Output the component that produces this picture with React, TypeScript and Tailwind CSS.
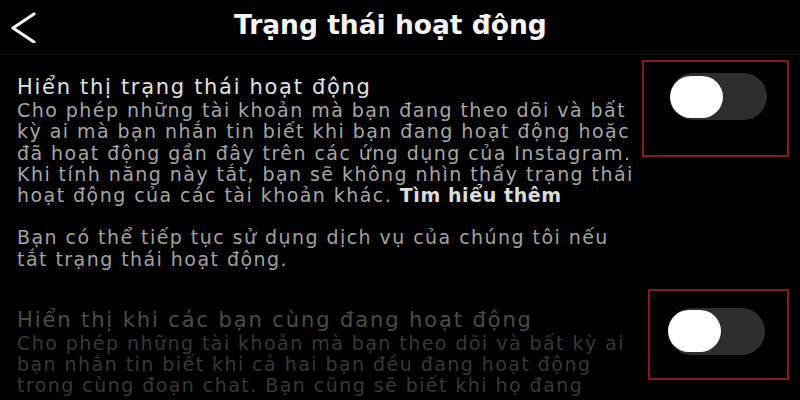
export default function App() {
  const desc1 = [
    'Cho phép những tài khoản mà bạn đang theo dõi và bất',
    'kỳ ai mà bạn nhắn tin biết khi bạn đang hoạt động hoặc',
    'đã hoạt động gần đây trên các ứng dụng của Instagram.',
    'Khi tính năng này tắt, bạn sẽ không nhìn thấy trạng thái',
  ]
  const para2 = [
    'Bạn có thể tiếp tục sử dụng dịch vụ của chúng tôi nếu',
    'tắt trạng thái hoạt động.',
  ]
  const desc2 = [
    'Cho phép những tài khoản mà bạn theo dõi và bất kỳ ai',
    'bạn nhắn tin biết khi cả hai bạn đều đang hoạt động',
    'trong cùng đoạn chat. Bạn cũng sẽ biết khi họ đang',
  ]

  return (
    <div className="w-[800px] h-[400px] overflow-hidden bg-black font-['DejaVu_Sans',sans-serif]">
      {/* header */}
      <div className="h-[55px] flex items-center border-b border-[#141414]">
        <button className="w-[48px] h-[55px] flex items-center pl-[10px]">
          <svg width="28" height="32" viewBox="0 0 28 32" fill="none">
            <polyline points="24,3 3,17 24,31" stroke="#f2f2f2" strokeWidth="3.2" strokeLinecap="round" strokeLinejoin="round" />
          </svg>
        </button>
        <h1 className="ml-[186px] text-[26.5px] font-bold text-[#f4f4f4] pb-[5px]">Trạng thái hoạt động</h1>
      </div>

      {/* hiện trạng thái */}
      <div className="flex items-start pl-[17px]">
        <div className="w-[620px] pt-[19px] whitespace-nowrap">
          <div className="text-[21px] leading-[26px] tracking-[1.7px] text-[#e2e2e2]">Hiển thị trạng thái hoạt động</div>
          <div className="text-[19px] leading-[21.25px] tracking-[1.45px] text-[#a6a6a6]">
            {desc1.map(l => (
              <div key={l}>{l}</div>
            ))}
            <div>
              hoạt động của các tài khoản khác. <span className="font-bold tracking-[0.6px] text-[#dcdcdc]">Tìm hiểu thêm</span>
            </div>
          </div>
          <div className="mt-[21px] text-[19px] leading-[21.25px] tracking-[1.45px] text-[#a2a2a2]">
            {para2.map(l => (
              <div key={l}>{l}</div>
            ))}
          </div>
        </div>
        <div className="mt-[5px] ml-[5px] w-[147px] h-[97px] shrink-0 border-2 border-[#8a1622] pt-[11px] pl-[26px]">
          <Toggle />
        </div>
      </div>

      {/* hiện khi cùng hoạt động */}
      <div className="flex items-start pl-[17px] mt-[19px]">
        <div className="w-[626px] pt-[18px] whitespace-nowrap">
          <div className="text-[21px] leading-[26px] tracking-[1.9px] text-[#4c4c4c]">Hiển thị khi các bạn cùng đang hoạt động</div>
          <div className="text-[19px] leading-[21.25px] tracking-[1.45px] text-[#383838]">
            {desc2.map(l => (
              <div key={l}>{l}</div>
            ))}
          </div>
        </div>
        <div className="ml-[5px] w-[141px] h-[91px] shrink-0 border-2 border-[#8a1622] pt-[17px] pl-[18px]">
          <Toggle />
        </div>
      </div>
    </div>
  )
}

function Toggle() {
  return (
    <div className="w-[97px] h-[47px] rounded-full bg-[#2e2e30] flex items-center">
      <div className="w-[53px] h-[42px] rounded-full bg-white" />
    </div>
  )
}
